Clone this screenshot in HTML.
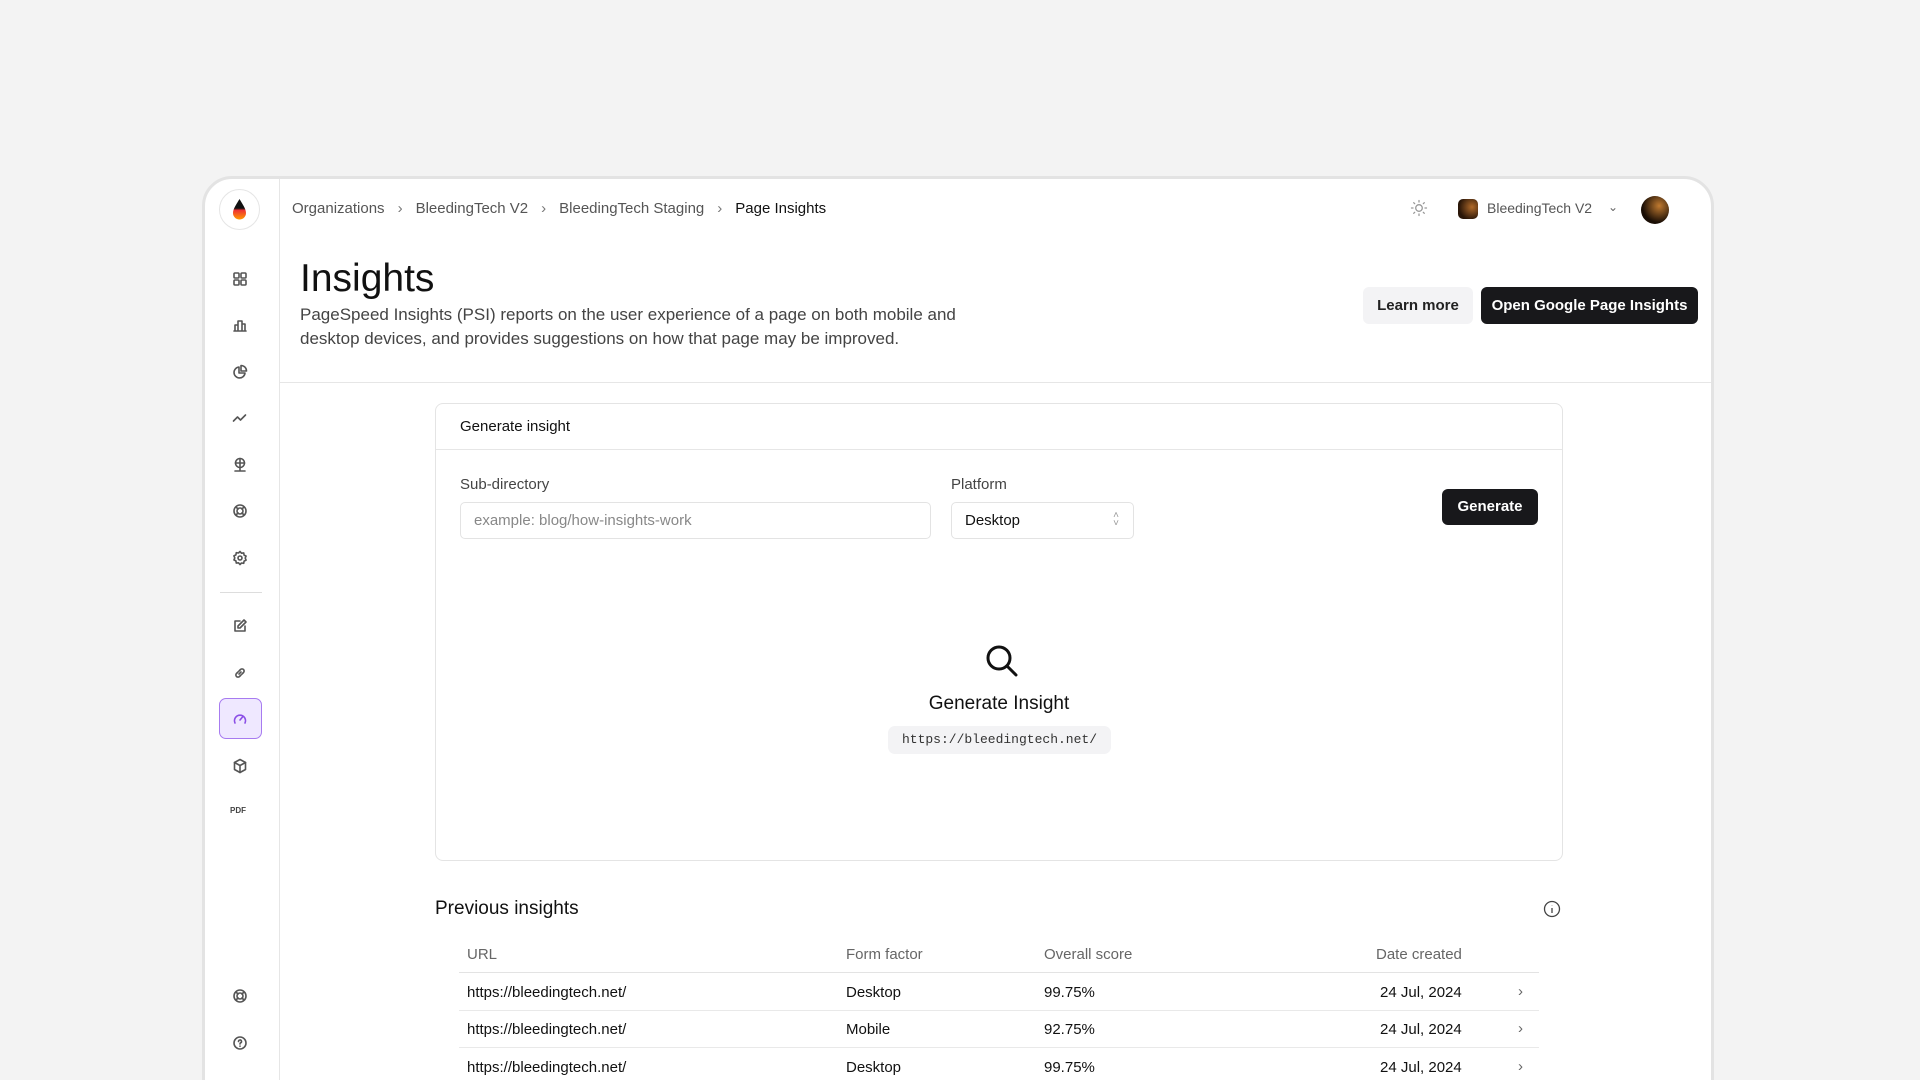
<!DOCTYPE html>
<html style="height:1080px;overflow:hidden"><head><meta charset="utf-8"><style>
*{box-sizing:border-box;margin:0;padding:0}
body{width:1920px;height:1080px;overflow:hidden;background:#f3f3f3;font-family:"Liberation Sans",sans-serif;color:#111;position:relative}
.frame{position:absolute;left:202px;top:176px;width:1512px;height:940px;background:#fff;border:3px solid #e3e3e3;border-radius:30px;overflow:hidden}
.a{position:absolute}
.side{left:0;top:0;width:75px;height:100%;border-right:1px solid #e6e6e6}
.ic{position:absolute;left:27px;width:18px;height:18px}
.ic svg{width:16px;height:16px;fill:none;stroke:#555;stroke-width:1.6;stroke-linecap:round;stroke-linejoin:round}
.bc{top:21px;left:87px;font-size:15px;color:#555;white-space:nowrap}
.bc span.sep{margin:0 13px;color:#777}
.btn{position:absolute;font-size:15px;font-weight:bold;border-radius:6px;text-align:center}
.tbl{font-size:15px}
</style></head><body>
<div class="frame">
 <div class="a side">
  <div class="a" style="left:14px;top:10px;width:41px;height:41px;border-radius:50%;border:1px solid #e5e5e5;background:#fff">
   <svg width="41" height="41" viewBox="0 0 41 41" style="position:absolute;left:-1px;top:-1px"><defs><linearGradient id="g" x1="0" y1="0" x2="0" y2="1"><stop offset="0.45" stop-color="#111"/><stop offset="0.55" stop-color="#e33"/><stop offset="1" stop-color="#f90"/></linearGradient></defs><path d="M20.5 10 C17 16 14 20 14 24 A6.5 6.5 0 0 0 27 24 C27 20 24 16 20.5 10Z" fill="url(#g)"/></svg>
  </div>
  <div class="ic" style="top:92px"><svg viewBox="0 0 16 16"><rect x="2" y="2" width="5" height="5" rx="1"/><rect x="9" y="2" width="5" height="5" rx="1"/><rect x="2" y="9" width="5" height="5" rx="1"/><rect x="9" y="9" width="5" height="5" rx="1"/></svg></div>
  <div class="ic" style="top:138px"><svg viewBox="0 0 16 16"><path d="M2 14h12M3 14V8h3v6M6 14V4h4v10M10 14V7h3v7"/></svg></div>
  <div class="ic" style="top:185px"><svg viewBox="0 0 16 16"><path d="M7 3a5.5 5.5 0 1 0 6 6H7z"/><path d="M9 1.5V7h5.5A5.5 5.5 0 0 0 9 1.5z"/></svg></div>
  <div class="ic" style="top:231px"><svg viewBox="0 0 16 16"><path d="M1.5 11l4-4 3 3 5-5"/></svg></div>
  <div class="ic" style="top:278px"><svg viewBox="0 0 16 16"><circle cx="8" cy="6" r="4.5"/><path d="M3.5 6h9M8 1.5v9M8 10.5v3M3 14h10"/></svg></div>
  <div class="ic" style="top:324px"><svg viewBox="0 0 16 16"><circle cx="8" cy="8" r="6"/><circle cx="8" cy="8" r="3"/><path d="M4 4l2 2M12 4l-2 2M4 12l2-2M12 12l-2-2"/></svg></div>
  <div class="ic" style="top:371px"><svg viewBox="0 0 16 16"><circle cx="8" cy="8" r="2"/><path d="M8 1.5l1.5 1.7 2.2-.3.4 2.2 2 1-.9 2 .9 2-2 1-.4 2.2-2.2-.3L8 14.5l-1.5-1.7-2.2.3-.4-2.2-2-1 .9-2-.9-2 2-1 .4-2.2 2.2.3z"/></svg></div>
  <div class="a" style="left:15px;top:413px;width:42px;height:1px;background:#ddd"></div>
  <div class="ic" style="top:439px"><svg viewBox="0 0 16 16"><path d="M8 3H3v10h10V8"/><path d="M12 2l2 2-6 6H6V8z"/></svg></div>
  <div class="ic" style="top:486px"><svg viewBox="0 0 16 16"><path d="M7 9l2-2M6 7L4.5 8.5a2.1 2.1 0 0 0 3 3L9 10M10 9l1.5-1.5a2.1 2.1 0 0 0-3-3L7 6"/></svg></div>
  <div class="a" style="left:14px;top:519px;width:43px;height:41px;border-radius:7px;background:#efe8ff;border:1.5px solid #a77bf0"></div>
  <div class="ic" style="top:532px"><svg viewBox="0 0 16 16" style="stroke:#8b4fe6"><path d="M3 12a5.5 5.5 0 1 1 10 0"/><path d="M8 9l2.5-3"/></svg></div>
  <div class="ic" style="top:579px"><svg viewBox="0 0 16 16"><path d="M8 1.5l5.5 3v7L8 14.5l-5.5-3v-7z"/><path d="M2.5 4.5L8 7.5l5.5-3M8 7.5v7"/></svg></div>
  <div class="a" style="left:25px;top:627px;font-size:8px;font-weight:bold;color:#444">PDF</div>
  <div class="ic" style="top:809px"><svg viewBox="0 0 16 16"><circle cx="8" cy="8" r="6"/><circle cx="8" cy="8" r="3"/><path d="M4 4l2 2M12 4l-2 2M4 12l2-2M12 12l-2-2"/></svg></div>
  <div class="ic" style="top:856px"><svg viewBox="0 0 16 16"><circle cx="8" cy="8" r="6"/><path d="M6.5 6.5a1.5 1.5 0 1 1 2 1.4c-.5.2-.5.6-.5 1.1M8 11v.2"/></svg></div>
 </div>
 <div class="a bc">Organizations<span class="sep">›</span>BleedingTech V2<span class="sep">›</span>BleedingTech Staging<span class="sep">›</span><span style="color:#111">Page Insights</span></div>
 <div class="a" style="left:1205px;top:20px"><svg width="18" height="18" viewBox="0 0 18 18" fill="none" stroke="#999" stroke-width="1.3" stroke-linecap="round"><circle cx="9" cy="9" r="3.3"/><path d="M9 1.5v1.5M9 15v1.5M1.5 9H3M15 9h1.5M3.7 3.7l1 1M13.3 13.3l1 1M3.7 14.3l1-1M13.3 4.7l1-1"/></svg></div>
 <div class="a" style="left:1253px;top:20px;width:20px;height:20px;border-radius:5px;background:radial-gradient(circle at 70% 40%,#b06a2a,#2a1608 70%)"></div>
 <div class="a" style="left:1282px;top:21px;font-size:14px;color:#555">BleedingTech V2</div>
 <div class="a" style="left:1403px;top:21px;font-size:12px;color:#666">⌄</div>
 <div class="a" style="left:1436px;top:17px;width:28px;height:28px;border-radius:50%;background:radial-gradient(circle at 65% 35%,#c07a30,#1a0e05 65%)"></div>
 <div class="a" style="left:95px;top:78px;font-size:39px">Insights</div>
 <div class="a" style="left:95px;top:124px;font-size:17px;line-height:24px;color:#444;width:700px">PageSpeed Insights (PSI) reports on the user experience of a page on both mobile and desktop devices, and provides suggestions on how that page may be improved.</div>
 <div class="btn" style="left:1158px;top:108px;width:110px;height:37px;line-height:37px;background:#f3f3f5;color:#222">Learn more</div>
 <div class="btn" style="left:1276px;top:108px;width:217px;height:37px;line-height:37px;background:#18181b;color:#fff">Open Google Page Insights</div>
 <div class="a" style="left:75px;top:203px;right:0;height:1px;background:#e6e6e6"></div>
 <div class="a" style="left:230px;top:224px;width:1128px;height:458px;border:1px solid #e4e4e4;border-radius:8px">
  <div class="a" style="left:24px;top:14px;font-size:15px">Generate insight</div>
  <div class="a" style="left:0;top:45px;right:0;height:1px;background:#e6e6e6"></div>
  <div class="a" style="left:24px;top:72px;font-size:15px;color:#444">Sub-directory</div>
  <div class="a" style="left:24px;top:98px;width:471px;height:37px;border:1px solid #e3e3e3;border-radius:5px;padding:9px 13px;font-size:15px;color:#888">example: blog/how-insights-work</div>
  <div class="a" style="left:515px;top:72px;font-size:15px;color:#444">Platform</div>
  <div class="a" style="left:515px;top:98px;width:183px;height:37px;border:1px solid #e3e3e3;border-radius:5px;padding:9px 13px;font-size:15px">Desktop<span style="position:absolute;right:14px;top:9px;font-size:10px;color:#999;line-height:8px">˄<br>˅</span></div>
  <div class="btn" style="left:1006px;top:85px;width:96px;height:36px;line-height:36px;background:#18181b;color:#fff">Generate</div>
  <svg class="a" style="left:547px;top:238px" width="38" height="38" viewBox="0 0 38 38" fill="none" stroke="#111" stroke-width="3" stroke-linecap="round"><circle cx="16" cy="16" r="11"/><path d="M24 24l9 9"/></svg>
  <div class="a" style="left:0;width:100%;top:289px;text-align:center;font-size:19px">Generate Insight</div>
  <div class="a" style="left:452px;top:322px;width:223px;height:28px;border-radius:7px;background:#f3f3f5;font-family:'Liberation Mono',monospace;font-size:13px;text-align:center;line-height:28px;color:#333">https://bleedingtech.net/</div>
 </div>
 <div class="a" style="left:230px;top:719px;font-size:19px">Previous insights</div>
 <svg class="a" style="left:1338px;top:721px" width="18" height="18" viewBox="0 0 18 18" fill="none" stroke="#444" stroke-width="1.3"><circle cx="9" cy="9" r="7.5"/><path d="M9 8v5M9 5.5v.3"/></svg>
 <div class="a tbl" style="left:230px;top:767px;width:1128px">
  <div style="position:absolute;left:32px;top:0;color:#666">URL</div>
  <div style="position:absolute;left:411px;top:0;color:#666">Form factor</div>
  <div style="position:absolute;left:609px;top:0;color:#666">Overall score</div>
  <div style="position:absolute;left:941px;top:0;color:#666">Date created</div>
  <div style="position:absolute;left:24px;top:26px;width:1080px;height:1px;background:#e3e3e3"></div>
  <div style="position:absolute;left:32px;top:38px">https://bleedingtech.net/</div><div style="position:absolute;left:411px;top:38px">Desktop</div><div style="position:absolute;left:609px;top:38px">99.75%</div><div style="position:absolute;left:945px;top:38px">24 Jul, 2024</div><div style="position:absolute;left:1083px;top:37px;color:#666">›</div>
  <div style="position:absolute;left:24px;top:64px;width:1080px;height:1px;background:#e9e9e9"></div>
  <div style="position:absolute;left:32px;top:75px">https://bleedingtech.net/</div><div style="position:absolute;left:411px;top:75px">Mobile</div><div style="position:absolute;left:609px;top:75px">92.75%</div><div style="position:absolute;left:945px;top:75px">24 Jul, 2024</div><div style="position:absolute;left:1083px;top:74px;color:#666">›</div>
  <div style="position:absolute;left:24px;top:101px;width:1080px;height:1px;background:#e9e9e9"></div>
  <div style="position:absolute;left:32px;top:113px">https://bleedingtech.net/</div><div style="position:absolute;left:411px;top:113px">Desktop</div><div style="position:absolute;left:609px;top:113px">99.75%</div><div style="position:absolute;left:945px;top:113px">24 Jul, 2024</div><div style="position:absolute;left:1083px;top:112px;color:#666">›</div>
 </div>
</div>
</body></html>
